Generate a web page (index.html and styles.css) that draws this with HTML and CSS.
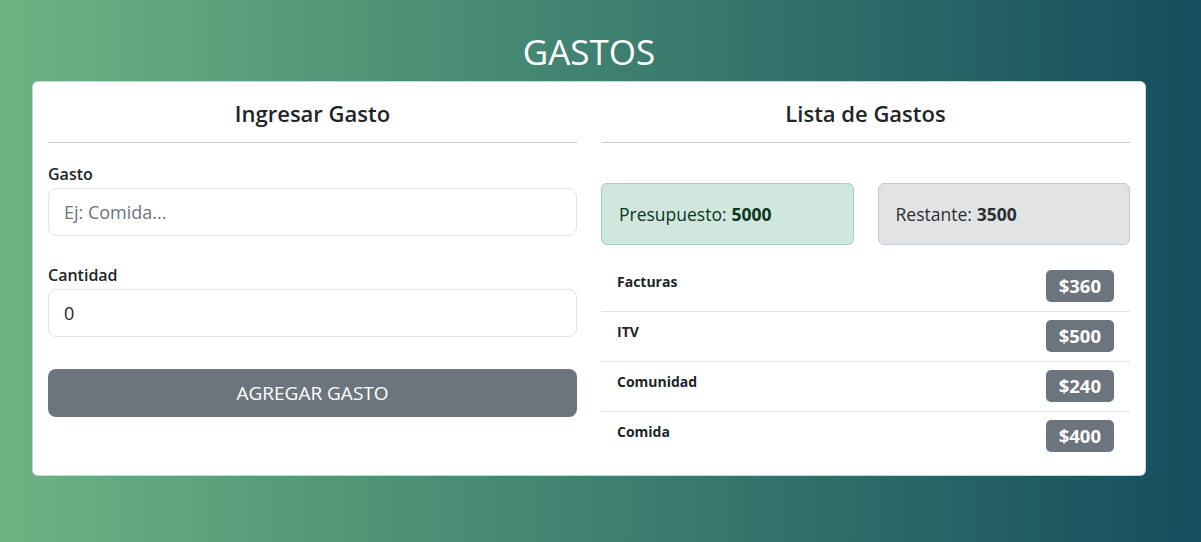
FILE: index.html
```html
<!DOCTYPE html>
<html lang="es">
<head>
<meta charset="utf-8">
<title>Gastos</title>
<link rel="stylesheet" href="styles.css">
</head>
<body>
<div class="page">
  <h1 class="title">GASTOS</h1>
  <div class="card">
    <div class="col">
      <h2 class="col-title">Ingresar Gasto</h2>
      <hr class="sep">
      <form class="form">
        <div class="field">
          <label class="label" for="gasto">Gasto</label>
          <input class="input" id="gasto" type="text" placeholder="Ej: Comida...">
        </div>
        <div class="field">
          <label class="label" for="cantidad">Cantidad</label>
          <input class="input" id="cantidad" type="number" value="0">
        </div>
        <button class="btn" type="button">AGREGAR GASTO</button>
      </form>
    </div>
    <div class="col">
      <h2 class="col-title">Lista de Gastos</h2>
      <hr class="sep">
      <div class="alerts">
        <div class="alert alert-green">Presupuesto: <b>5000</b></div>
        <div class="alert alert-gray">Restante: <b>3500</b></div>
      </div>
      <ul class="list">
        <li class="item"><span class="name">Facturas</span><span class="badge">$360</span></li>
        <li class="item"><span class="name">ITV</span><span class="badge">$500</span></li>
        <li class="item"><span class="name">Comunidad</span><span class="badge">$240</span></li>
        <li class="item"><span class="name">Comida</span><span class="badge">$400</span></li>
      </ul>
    </div>
  </div>
</div>
</body>
</html>
```

FILE: styles.css
```css
* { box-sizing: border-box; }
html, body { height: 100%; }
body {
  margin: 0;
  font-family: "Open Sans", "Noto Sans", sans-serif;
  color: #212529;
  background: linear-gradient(to right, #6cb383 0%, #3f8170 50%, #154e5f 100%);
}
.page {
  padding: 28px 0 0 32px;
}
.title {
  margin: 0;
  width: 1114px;
  text-align: center;
  color: #fff;
  font-family: "Open Sans", sans-serif;
  font-weight: 500;
  font-size: 35px;
  line-height: 48px;
  height: 53px;
}
.card {
  width: 1114px;
  background: #fff;
  border: 1px solid rgba(0,0,0,.175);
  border-radius: 6px;
  padding: 0 15px 15px;
  display: grid;
  grid-template-columns: 529px 529px;
  column-gap: 24px;
  height: 395px;
}
.col { display: flex; flex-direction: column; }
.col-title {
  margin: 0;
  text-align: center;
  font-weight: 600;
  font-size: 22px;
  line-height: 30px;
  padding-top: 16px;
  color: #212529;
}
.sep {
  margin: 14px 0 0;
  border: 0;
  border-top: 1px solid #c8c8c8;
}
.form { display: flex; flex-direction: column; padding-top: 20px; }
.field { display: flex; flex-direction: column; margin-bottom: 28px; }
.field + .field { margin-bottom: 32px; }
.label {
  font-size: 16px;
  font-weight: 600;
  line-height: 22px;
  margin-bottom: 3px;
}
.input {
  height: 48px;
  border: 1px solid #dee2e6;
  border-radius: 8px;
  padding: 0 15px;
  font-family: inherit;
  font-size: 18px;
  color: #212529;
}
.input::placeholder { color: #6c757d; }
.btn {
  height: 48px;
  border: 0;
  border-radius: 8px;
  background: #6c757d;
  color: #fff;
  font-family: inherit;
  font-size: 19px;
}
.alerts {
  display: grid;
  grid-template-columns: 1fr 1fr;
  column-gap: 24px;
  margin-top: 40px;
}
.alert {
  height: 62px;
  border-radius: 6px;
  border: 1px solid;
  padding: 0 17px;
  display: flex;
  align-items: center;
  font-size: 17.5px;
}
.alert-green { background: #d1e7dd; border-color: #a3cfbb; color: #0a3622; }
.alert-gray { background: #e2e3e5; border-color: #c4c8cb; color: #2b2f32; }
.alert b { font-weight: 700; margin-left: 5px; }
.list { list-style: none; margin: 17px 0 0; padding: 0; }
.item {
  display: flex;
  justify-content: space-between;
  align-items: flex-start;
  padding: 8px 16px 8px 16px;
  height: 50px;
  border-bottom: 1px solid #dee2e6;
}
.item:last-child { border-bottom: 0; }
.name { font-size: 14px; font-weight: 700; line-height: 24px; margin-top: 0; }
.badge {
  background: #6c757d;
  color: #fff;
  font-weight: 700;
  font-size: 18.5px;
  border-radius: 5px;
  padding: 0 13px;
  height: 32px;
  line-height: 32px;
}
```
